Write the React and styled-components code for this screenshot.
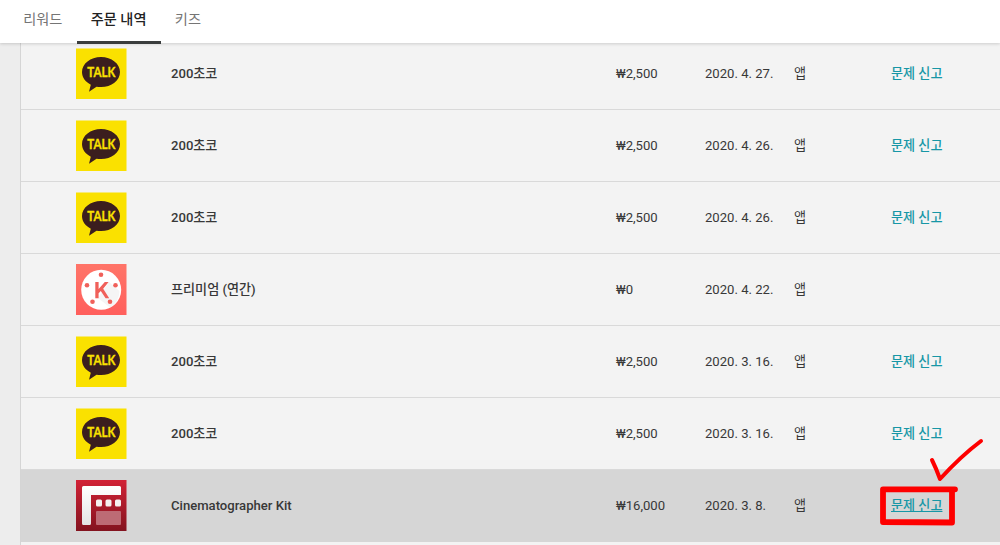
import React from 'react'
import styled, { createGlobalStyle } from 'styled-components'

const GlobalStyle = createGlobalStyle`
    * {
        box-sizing: border-box;
    }
    body {
        margin: 0;
        overflow: hidden;
        font-family: Roboto, "Noto Sans CJK KR", sans-serif;
        font-size: 13.1px;
        color: #383838;
        background: #ededed;
    }
`

const Page = styled.div`
    height: 545px;
    overflow: hidden;
`

const Tabs = styled.nav`
    position: relative;
    z-index: 1;
    display: flex;
    height: 43px;
    padding-left: 9px;
    background: #fff;
    box-shadow: 0 1px 3px rgba(0, 0, 0, 0.16);
`

const Tab = styled.a`
    height: 43.5px;
    padding: 0 14.2px;
    line-height: 38px;
    font-size: 14.2px;
    font-weight: ${props => props.$active ? 500 : 400};
    color: ${props => props.$active ? '#222' : '#757575'};
    border-bottom: 3px solid ${props => props.$active ? '#3a3d3d' : 'transparent'};
`

/* the list is scrolled a few pixels under the tabs */
const OrderList = styled.div`
    margin: -5px 0 0 20px;
    border-left: 1px solid #d5d5d5;
    background: #f3f3f3;
`

const Row = styled.div`
    display: grid;
    grid-template-columns: 95px 445px 89px 89px 97px 1fr;
    align-items: center;
    height: 72px;
    padding-left: 55px;
    border-bottom: 1px solid ${props => props.$hover ? '#d6d6d6' : '#d9d9d9'};
    background: ${props => props.$hover ? '#d6d6d6' : 'transparent'};
`

const Thumb = styled.svg`
    display: block;
    width: 51px;
    height: 51px;
`

const Cell = styled.span`
    line-height: 20px;
    white-space: pre;
`

const Title = styled(Cell)`
    font-weight: 500;
`

const Report = styled(Cell)`
    position: relative;
    justify-self: start;
    font-weight: 500;
    color: #1797a6;
    text-decoration: ${props => props.$hover ? 'underline' : 'none'};
`

const Marker = styled.svg`
    position: absolute;
    left: -16px;
    top: -61.5px;
    width: 120px;
    height: 95px;
`

const TalkIcon = () => (
    <Thumb viewBox="0 0 51 51">
        <rect y="0.5" width="50.5" height="50.5" fill="#fae100" />
        <path d="M25 9C14.5 9 6 15.7 6 24C6 29.5 9.5 34 14.8 36.7L13 43.7L20.5 38.7C22 39 23.5 39.1 25 39.1C35.5 39.1 44 32.5 44 24C44 15.7 35.5 9 25 9Z" fill="#3b1e1e" />
        <text x="11.3" y="28.8" textLength="28" lengthAdjust="spacingAndGlyphs" fontFamily="Lato, sans-serif" fontSize="12.8" fontWeight="700" fill="#fae100" stroke="#fae100" strokeWidth="0.3">TALK</text>
    </Thumb>
)

const KineIcon = () => (
    <Thumb viewBox="0 0 51 51">
        <defs>
            <linearGradient id="kine" x1="0" y1="0" x2="0" y2="1">
                <stop offset="0" stopColor="#ff7468" />
                <stop offset="1" stopColor="#ff5f5c" />
            </linearGradient>
        </defs>
        <rect width="50.5" height="51" fill="url(#kine)" />
        <circle cx="25.2" cy="25.8" r="20" fill="#fff" />
        <path d="M33 18L43.5 27A20 20 0 0 1 34 43.5L22 34Z" fill="#f5f5f5" />
        <g fill="#f0605a">
            <circle cx="25" cy="10.8" r="2.3" />
            <circle cx="11" cy="21.2" r="2.3" />
            <circle cx="39.5" cy="21.2" r="2.3" />
            <circle cx="16.5" cy="37.7" r="2.3" />
            <circle cx="34" cy="37.7" r="2.3" />
        </g>
        <path d="M19.3 18V34.2H22.6V29.3L24.8 27L29.6 34.2H33.2L27.2 24.7L32.6 18H28.8L22.6 25V18Z" fill="#f0605a" />
    </Thumb>
)

const FilmIcon = () => (
    <Thumb viewBox="0 0 51 51">
        <defs>
            <linearGradient id="film" x1="0" y1="0" x2="0" y2="1">
                <stop offset="0" stopColor="#d22236" />
                <stop offset="1" stopColor="#83131f" />
            </linearGradient>
            <linearGradient id="frame" x1="0" y1="0" x2="0" y2="1">
                <stop offset="0" stopColor="#fff" />
                <stop offset="1" stopColor="#e4e4e4" />
            </linearGradient>
        </defs>
        <rect width="50.5" height="51" fill="url(#film)" />
        <path d="M7.5 6H43.5Q45 6 45 7.5V15H15V43.5Q15 45 13.5 45H7.5Q6 45 6 43.5V7.5Q6 6 7.5 6Z" fill="url(#frame)" />
        <g fill="#f5f0f0">
            <rect x="20" y="19.5" width="6" height="7" rx="1.5" />
            <rect x="29.5" y="19.5" width="6" height="7" rx="1.5" />
            <rect x="39" y="19.5" width="6" height="7" rx="1.5" />
        </g>
        <rect x="20" y="31" width="25" height="14" rx="1" fill="#bd6b75" />
    </Thumb>
)

const icons = { talk: TalkIcon, kine: KineIcon, film: FilmIcon }

const orders = [
    { icon: 'talk', title: '200초코', price: '₩2,500', date: '2020. 4. 27.', report: true },
    { icon: 'talk', title: '200초코', price: '₩2,500', date: '2020. 4. 26.', report: true },
    { icon: 'talk', title: '200초코', price: '₩2,500', date: '2020. 4. 26.', report: true },
    { icon: 'kine', title: '프리미엄 (연간)', price: '₩0', date: '2020. 4. 22.' },
    { icon: 'talk', title: '200초코', price: '₩2,500', date: '2020. 3. 16.', report: true },
    { icon: 'talk', title: '200초코', price: '₩2,500', date: '2020. 3. 16.', report: true },
    { icon: 'film', title: 'Cinematographer Kit', price: '₩16,000', date: '2020. 3. 8.', report: true, hover: true },
]

const OrderRow = ({ order }) => {
    const Icon = icons[order.icon]
    return (
        <Row $hover={order.hover}>
            <Icon />
            <Title>{order.title}</Title>
            <Cell>{order.price}</Cell>
            <Cell>{order.date}</Cell>
            <Cell>앱</Cell>
            {order.report && (
                <Report $hover={order.hover}>
                    문제 신고
                    {order.hover && (
                        <Marker viewBox="875 434 120 95" fill="none" stroke="#fe0000" strokeLinecap="round" strokeLinejoin="round">
                            <path d="M955 489.3L883 489.3V522L952 522.5V492" strokeWidth="5.8" />
                            <path d="M932 460Q936 468 940 479Q961 456 981 441" strokeWidth="4" />
                        </Marker>
                    )}
                </Report>
            )}
        </Row>
    )
}

const App = () => (
    <Page>
        <GlobalStyle />
        <Tabs>
            <Tab>리워드</Tab>
            <Tab $active>주문 내역</Tab>
            <Tab>키즈</Tab>
        </Tabs>
        <OrderList>
            {orders.map((order, i) => <OrderRow key={i} order={order} />)}
            <Row />
        </OrderList>
    </Page>
)

export default App
